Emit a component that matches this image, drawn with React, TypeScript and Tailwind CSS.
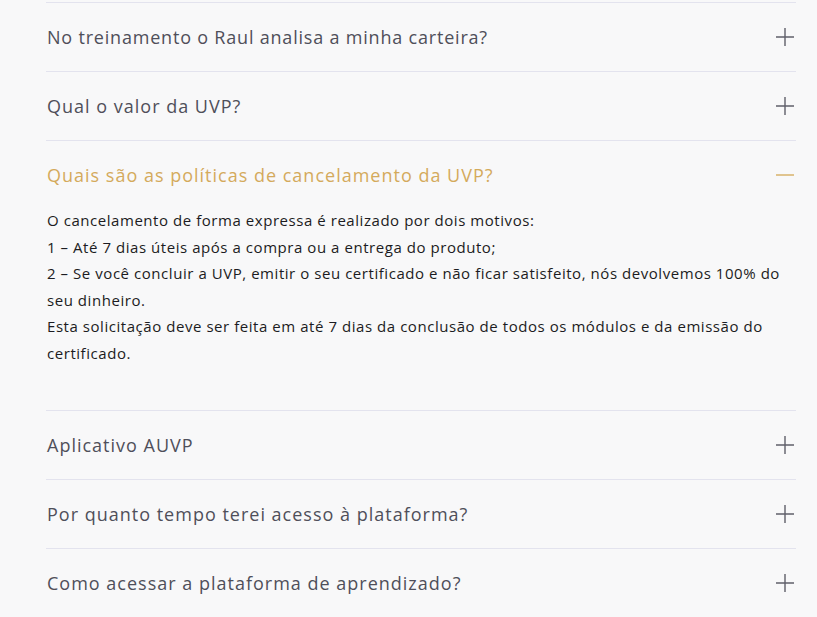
import React from "react";

const items = [
  { q: "No treinamento o Raul analisa a minha carteira?", open: false, first: true },
  { q: "Qual o valor da UVP?", open: false },
  { q: "Quais são as políticas de cancelamento da UVP?", open: true },
  { q: "Aplicativo AUVP", open: false },
  { q: "Por quanto tempo terei acesso à plataforma?", open: false },
  { q: "Como acessar a plataforma de aprendizado?", open: false },
];

function Plus() {
  return (
    <svg width="20" height="20" viewBox="0 0 20 20" className="shrink-0">
      <path d="M10 1V19M1 10H19" stroke="#5f5f6a" strokeWidth="1.4" fill="none" />
    </svg>
  );
}

function Minus() {
  return (
    <svg width="20" height="20" viewBox="0 0 20 20" className="shrink-0">
      <path d="M1 10H19" stroke="#d6ae62" strokeWidth="1.4" fill="none" />
    </svg>
  );
}

export default function App() {
  return (
    <div
      className="w-[817px] h-[617px] overflow-hidden bg-[#f8f8f9]"
      style={{ fontFamily: '"Open Sans", "DejaVu Sans", sans-serif' }}
    >
      <div className="w-[796px] pt-[2px] pl-[46px]">
        {items.map((it, i) => (
          <div key={i} className="border-t border-[#e3e3ee]">
            <div className="h-[68px] flex items-center justify-between pl-px pr-[1px]">
              <span
                className={
                  "text-[18px] " +
                  (it.first ? "tracking-[0.8px] " : "tracking-[1px] ") +
                  (it.open ? "text-[#d4aa5c]" : "text-[#4f4f5a]")
                }
              >
                {it.q}
              </span>
              {it.open ? <Minus /> : <Plus />}
            </div>
            {it.open && (
              <div className="-mt-[2px] pb-[44px] pl-px pr-[8px] text-[15px] tracking-[0.55px] leading-[26.5px] text-[#1c1c22]">
                <p>O cancelamento de forma expressa é realizado por dois motivos:</p>
                <p>1 – Até 7 dias úteis após a compra ou a entrega do produto;</p>
                <p>
                  2 – Se você concluir a UVP, emitir o seu certificado e não ficar satisfeito, nós devolvemos 100% do seu dinheiro.
                </p>
                <p>
                  Esta solicitação deve ser feita em até 7 dias da conclusão de todos os módulos e da emissão do certificado.
                </p>
              </div>
            )}
          </div>
        ))}
      </div>
    </div>
  );
}
